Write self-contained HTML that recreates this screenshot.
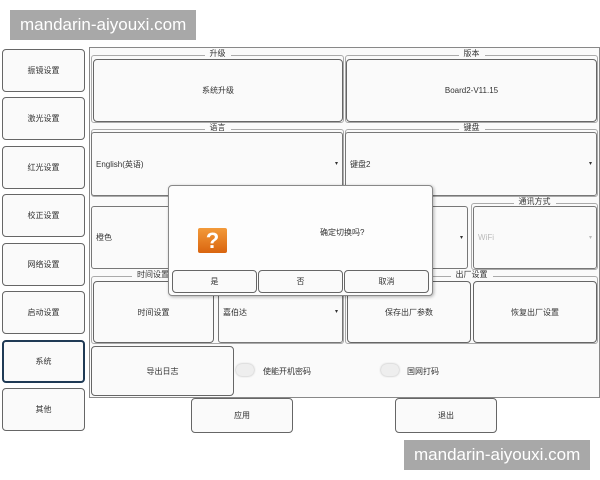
<!DOCTYPE html>
<html><head><meta charset="utf-8"><style>
*{box-sizing:border-box;margin:0;padding:0}
body{width:600px;height:480px;background:#fff;position:relative;overflow:hidden;font-family:"Liberation Sans","Noto Sans CJK SC",sans-serif;font-size:8px;color:#333}
.a{position:absolute}
.btn{position:absolute;border:1.5px solid #666;border-radius:4px;background:#fafafa;display:flex;align-items:center;justify-content:center;font-size:8px;color:#333}
.fs{position:absolute;border:1.5px solid #777;border-radius:3px}
.lg{position:absolute;top:-7px;left:0;right:0;text-align:center;font-size:8px;line-height:10px}
.lg span{background:#fafafa;padding:0 5px}
.wm{position:absolute;background:#a8a8a8;color:#fff;font-size:17px;line-height:30px;padding-left:10px}
.dd{position:absolute;border:1.5px solid #777;border-radius:3px;background:#fafafa;font-size:8px;display:flex;align-items:center;padding-left:4px}
.arr{position:absolute;right:4px;top:50%;font-size:6px;margin-top:-4px}
.tg{position:absolute;width:18px;height:12px;border-radius:6px;background:#eee;box-shadow:0 0 2px #aaa}
</style></head><body>
<div class="wm" style="left:10px;top:10px;width:186px">mandarin-aiyouxi.com</div>
<div class="wm" style="left:404px;top:440px;width:186px">mandarin-aiyouxi.com</div>

<div class="btn" style="left:2px;top:49px;width:83px;height:43px">振镜设置</div>
<div class="btn" style="left:2px;top:97px;width:83px;height:43px">激光设置</div>
<div class="btn" style="left:2px;top:146px;width:83px;height:43px">红光设置</div>
<div class="btn" style="left:2px;top:194px;width:83px;height:43px">校正设置</div>
<div class="btn" style="left:2px;top:243px;width:83px;height:43px">网络设置</div>
<div class="btn" style="left:2px;top:291px;width:83px;height:43px">启动设置</div>
<div class="btn" style="left:2px;top:340px;width:83px;height:43px;border:2px solid #1f3a55">系统</div>
<div class="btn" style="left:2px;top:388px;width:83px;height:43px">其他</div>

<div class="a" style="left:89px;top:47px;width:511px;height:351px;border:1.5px solid #888;background:#fafafa"></div>

<div class="fs" style="left:91px;top:55px;width:253px;height:68px;border-color:#aaa"><div class="lg"><span>升级</span></div></div>
<div class="btn" style="left:93px;top:59px;width:250px;height:63px">系统升级</div>
<div class="fs" style="left:345px;top:55px;width:253px;height:68px;border-color:#aaa"><div class="lg"><span>版本</span></div></div>
<div class="btn" style="left:346px;top:59px;width:251px;height:63px">Board2-V11.15</div>

<div class="fs" style="left:91px;top:129px;width:253px;height:68px;border-color:#aaa"><div class="lg"><span>语言</span></div></div>
<div class="dd" style="left:91px;top:132px;width:252px;height:64px">English(英语)<span class="arr">▾</span></div>
<div class="fs" style="left:345px;top:129px;width:253px;height:68px;border-color:#aaa"><div class="lg"><span>键盘</span></div></div>
<div class="dd" style="left:345px;top:132px;width:252px;height:64px">键盘2<span class="arr">▾</span></div>

<div class="dd" style="left:91px;top:206px;width:252px;height:63px">橙色</div>
<div class="dd" style="left:345px;top:206px;width:123px;height:63px"><span class="arr">▾</span></div>
<div class="fs" style="left:471px;top:203px;width:127px;height:67px;border-color:#aaa"><div class="lg"><span>通讯方式</span></div></div>
<div class="dd" style="left:473px;top:206px;width:124px;height:63px;color:#bbb">WiFi<span class="arr">▾</span></div>

<div class="fs" style="left:91px;top:276px;width:253px;height:68px;border-color:#aaa"><div class="lg" style="text-align:left;left:40px"><span>时间设置</span></div></div>
<div class="btn" style="left:93px;top:281px;width:121px;height:62px">时间设置</div>
<div class="dd" style="left:218px;top:281px;width:125px;height:62px">嘉伯达<span class="arr">▾</span></div>
<div class="fs" style="left:345px;top:276px;width:253px;height:68px;border-color:#aaa"><div class="lg"><span>出厂设置</span></div></div>
<div class="btn" style="left:347px;top:281px;width:124px;height:62px">保存出厂参数</div>
<div class="btn" style="left:473px;top:281px;width:124px;height:62px">恢复出厂设置</div>

<div class="btn" style="left:91px;top:346px;width:143px;height:50px">导出日志</div>
<div class="tg" style="left:236px;top:364px"></div>
<div class="a" style="left:263px;top:366px">使能开机密码</div>
<div class="tg" style="left:381px;top:364px"></div>
<div class="a" style="left:407px;top:366px">国网打码</div>

<div class="btn" style="left:191px;top:398px;width:102px;height:35px">应用</div>
<div class="btn" style="left:395px;top:398px;width:102px;height:35px">退出</div>

<div class="a" style="left:168px;top:185px;width:265px;height:111px;background:#fdfdfd;border:1px solid #888;border-radius:4px;box-shadow:1px 1px 3px rgba(0,0,0,.3)"></div>
<div class="a" style="left:198px;top:228px;width:29px;height:25px;background:linear-gradient(#f39a3a,#d9650f);border-radius:2px;color:#fff;font-weight:bold;font-size:22px;line-height:25px;text-align:center;font-family:'Liberation Sans',sans-serif">?</div>
<div class="a" style="left:320px;top:227px">确定切换吗?</div>
<div class="btn" style="left:172px;top:270px;width:85px;height:23px">是</div>
<div class="btn" style="left:258px;top:270px;width:85px;height:23px">否</div>
<div class="btn" style="left:344px;top:270px;width:85px;height:23px">取消</div>
</body></html>
